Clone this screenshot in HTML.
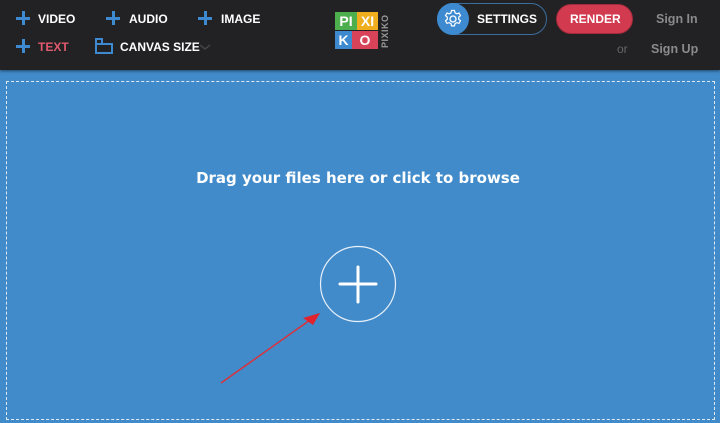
<!DOCTYPE html><html><head><style>
body{margin:0;width:720px;height:423px;overflow:hidden;background:#428bca;font-family:"Liberation Sans",Arial,sans-serif}
.hdr{position:absolute;left:0;top:0;width:720px;height:70px;background:#222224;box-shadow:0 1px 3px rgba(0,0,0,.5)}
.t{position:absolute;color:#fff;font-weight:bold;font-size:12px;letter-spacing:0px}
.p{position:absolute;width:14px;height:14px}
.p:before{content:"";position:absolute;left:6px;top:0;width:3px;height:14px;background:#3d8ad0}
.p:after{content:"";position:absolute;left:0;top:6px;width:14px;height:3px;background:#3d8ad0}
.tile{position:absolute;color:#fff;font-weight:bold;font-size:14px;text-align:center;line-height:18px}
</style></head><body>
<div class="hdr">
<div class="p" style="left:16px;top:11px"></div><div class="t" style="left:38px;top:12px">VIDEO</div>
<div class="p" style="left:106px;top:11px"></div><div class="t" style="left:129px;top:12px">AUDIO</div>
<div class="p" style="left:198px;top:11px"></div><div class="t" style="left:221px;top:12px">IMAGE</div>
<div class="p" style="left:16px;top:39px"></div><div class="t" style="left:38px;top:40px;color:#e05a6e">TEXT</div>
<svg style="position:absolute;left:95px;top:38px" width="18" height="16"><path d="M1 1h6v5h10v9H1z M1 6h6" fill="none" stroke="#3d8ad0" stroke-width="2"/></svg>
<div class="t" style="left:120px;top:40px">CANVAS SIZE</div>
<svg style="position:absolute;left:199px;top:43px" width="12" height="8"><path d="M1 2l5 4 5-4" fill="none" stroke="#444" stroke-width="1.5"/></svg>
<div class="tile" style="left:335px;top:12px;width:22px;background:#4cae4c">PI</div>
<div class="tile" style="left:357px;top:12px;width:21px;background:#f0ad1e">XI</div>
<div class="tile" style="left:335px;top:31px;width:17px;background:#3d8ad0">K</div>
<div class="tile" style="left:352px;top:31px;width:26px;background:#d9435a">O</div>
<div style="position:absolute;left:380px;top:48px;transform:rotate(-90deg);transform-origin:0 0;color:#999;font-weight:bold;font-size:9px;letter-spacing:0.5px">PIXIKO</div>
<div style="position:absolute;left:437px;top:3px;width:108px;height:30px;border:1px solid #3a6e9e;border-radius:16px;background:#222"></div>
<div style="position:absolute;left:437px;top:3px;width:32px;height:32px;border-radius:16px;background:#3d8ad0"></div>
<svg style="position:absolute;left:443px;top:9px" width="20" height="20" viewBox="0 0 20 20"><circle cx="10" cy="10" r="3" fill="none" stroke="#fff" stroke-width="1.3"/><path d="M8.5 1.5h3l.5 2.3 1.8 1 2.2-.8 1.5 2.6-1.8 1.6v2l1.8 1.6-1.5 2.6-2.2-.8-1.8 1-.5 2.3h-3l-.5-2.3-1.8-1-2.2.8-1.5-2.6 1.8-1.6v-2L2.5 6.6 4 4l2.2.8 1.8-1z" fill="none" stroke="#fff" stroke-width="1.2"/></svg>
<div class="t" style="left:477px;top:12px">SETTINGS</div>
<div style="position:absolute;left:556px;top:4px;width:75px;height:28px;border-radius:15px;background:#d23a50;border:1px solid #a22a3c"></div>
<div class="t" style="left:570px;top:12px">RENDER</div>
<div class="t" style="left:656px;top:12px;color:#8a8a8a;font-size:12.5px">Sign In</div>
<div class="t" style="left:617px;top:42px;color:#666;font-weight:normal">or</div>
<div class="t" style="left:651px;top:42px;color:#8a8a8a;font-size:12.5px">Sign Up</div>
</div>
<div style="position:absolute;left:6px;top:81px;width:707px;height:337px;border:1px dashed #dfeaf5"></div>
<div style="position:absolute;left:0;top:169px;width:716px;text-align:center;color:#fff;font-weight:bold;font-size:15px;font-family:'DejaVu Sans',sans-serif">Drag your files here or click to browse</div>
<svg style="position:absolute;left:0;top:0" width="720" height="423">
<circle cx="358" cy="284" r="37.5" fill="none" stroke="#e8f0f8" stroke-width="1.2"/>
<path d="M358 267v35M340 284h36" stroke="#fff" stroke-width="3" stroke-linecap="round"/>
<path d="M221 383L310 320" stroke="#d8323c" stroke-width="1.5"/>
<path d="M320 313L303 318L313 325z" fill="#e0232e"/>
</svg>
</body></html>
